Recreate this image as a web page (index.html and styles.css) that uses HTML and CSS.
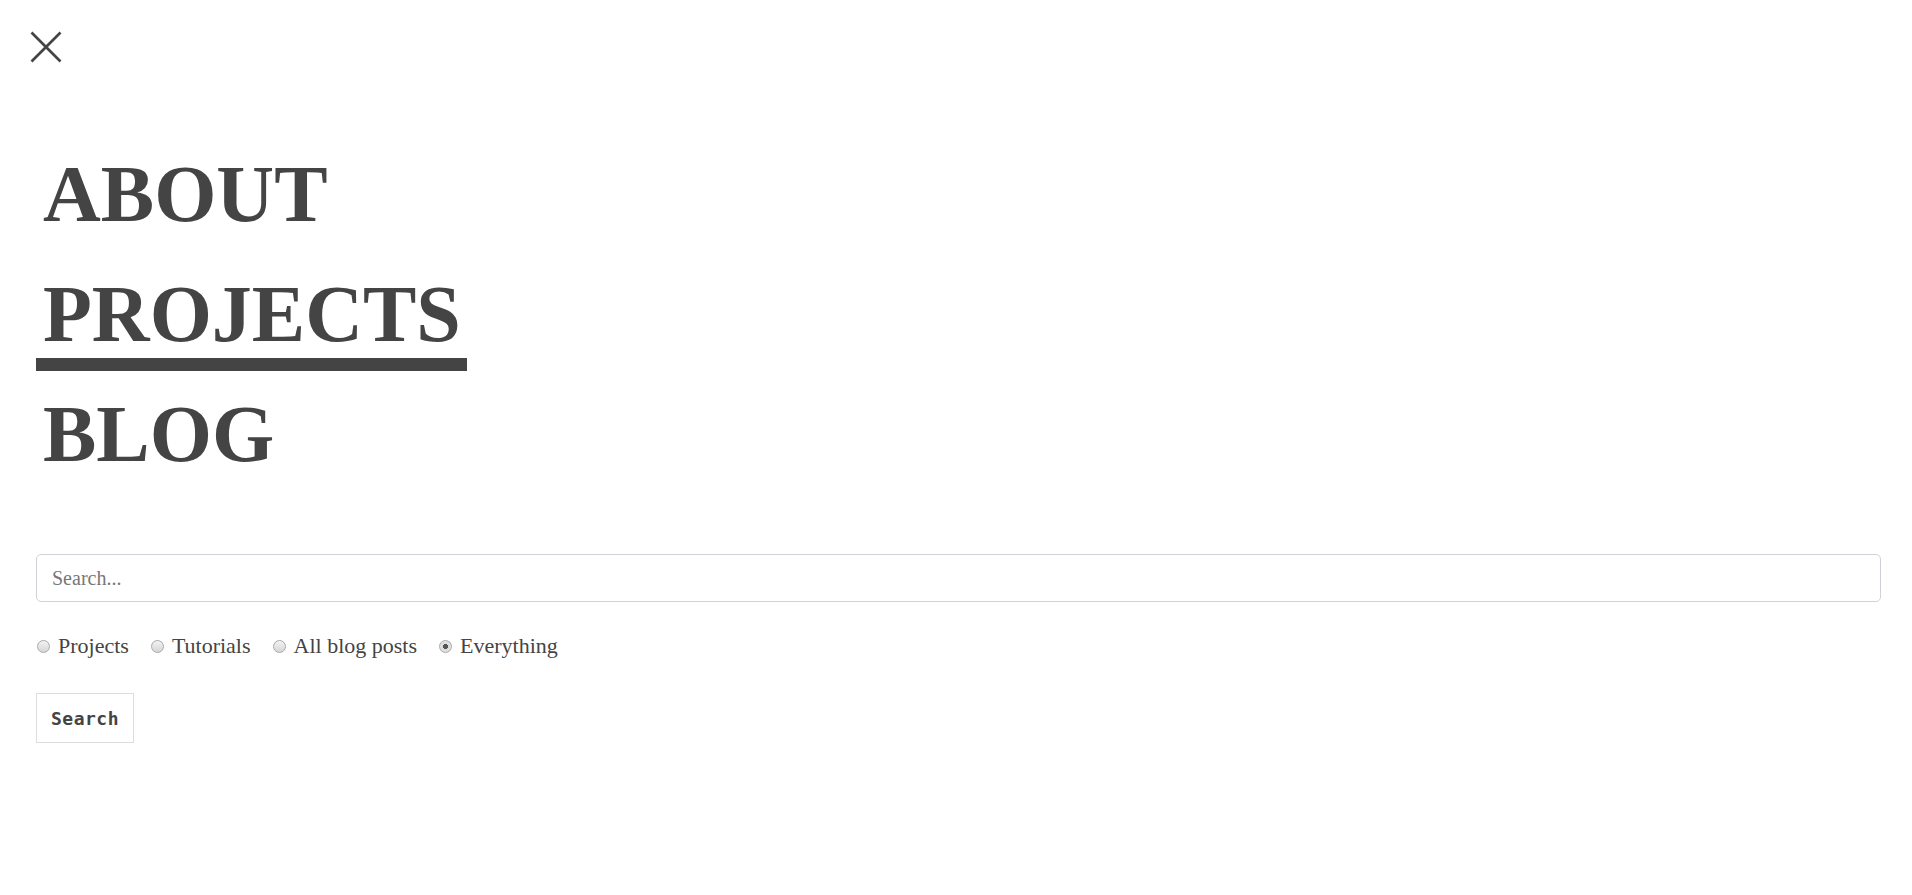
FILE: index.html
```html
<!DOCTYPE html>
<html lang="en">
<head>
<meta charset="utf-8">
<title>Menu</title>
<link rel="stylesheet" href="styles.css">
</head>
<body>
<div class="overlay">
  <button class="close" type="button" aria-label="Close">
    <svg width="32" height="32" viewBox="0 0 32 32"><path d="M1.5 1.5 L30.5 30.5 M30.5 1.5 L1.5 30.5" stroke="#444" stroke-width="2.7" fill="none"/></svg>
  </button>
  <nav class="menu">
    <ul>
      <li><a href="#">ABOUT</a></li>
      <li><a href="#" class="active">PROJECTS</a></li>
      <li><a href="#">BLOG</a></li>
    </ul>
  </nav>
  <form class="search">
    <input class="search-input" type="text" placeholder="Search...">
    <div class="filters">
      <label class="filter"><input type="radio" name="scope"><span>Projects</span></label>
      <label class="filter"><input type="radio" name="scope"><span>Tutorials</span></label>
      <label class="filter"><input type="radio" name="scope"><span>All blog posts</span></label>
      <label class="filter"><input type="radio" name="scope" checked><span>Everything</span></label>
    </div>
    <button class="search-btn" type="button">Search</button>
  </form>
</div>
</body>
</html>
```
FILE: styles.css
```css
html, body {
  margin: 0;
  background: #fff;
  color: #444;
  font-family: "Liberation Serif", "Times New Roman", serif;
}

.overlay {
  padding: 31px 31px 0 36px;
}

.close {
  display: block;
  margin-left: -6px;
  width: 32px;
  height: 32px;
  padding: 0;
  border: 0;
  background: none;
  cursor: pointer;
}

.close svg {
  display: block;
}

.menu {
  margin-top: 71px;
}

.menu ul {
  list-style: none;
  margin: 0;
  padding: 0;
}

.menu li {
  font-size: 80px;
  line-height: 120px;
  font-weight: bold;
}

.menu a {
  color: #444;
  text-decoration: none;
  padding: 0 6px 0 7px;
}

.menu a.active {
  border-bottom: 13px solid #444;
}

.search {
  margin-top: 60px;
}

.search-input {
  display: block;
  box-sizing: border-box;
  width: 100%;
  height: 48px;
  margin: 0;
  padding: 0 15px;
  border: 1px solid #cfd3d8;
  border-radius: 5px;
  font-family: "Liberation Serif", "Times New Roman", serif;
  font-size: 20px;
  color: #444;
  outline: none;
}

.search-input::placeholder {
  color: #777;
}

.filters {
  margin-top: 32px;
  display: flex;
  align-items: center;
  gap: 21px;
  height: 24px;
}

.filter {
  display: flex;
  align-items: center;
  font-size: 22px;
  line-height: 24px;
  color: #444;
}

.filter input {
  appearance: none;
  -webkit-appearance: none;
  box-sizing: border-box;
  width: 13px;
  height: 13px;
  margin: 0 8px 0 1px;
  border: 1px solid #a9a9a9;
  border-radius: 50%;
  background: linear-gradient(#f2f2f2, #d6d6d6);
}

.filter input:checked {
  background: radial-gradient(circle, #555 0 2.3px, #dcdcdc 2.8px, #e8e8e8 100%);
}

.search-btn {
  display: block;
  margin-top: 35px;
  height: 50px;
  padding: 0 14px;
  border: 1px solid #ddd;
  background: #fff;
  color: #444;
  font-family: "DejaVu Sans Mono", "Liberation Mono", monospace;
  font-weight: bold;
  font-size: 18px;
  letter-spacing: 0.5px;
  cursor: pointer;
}
```
